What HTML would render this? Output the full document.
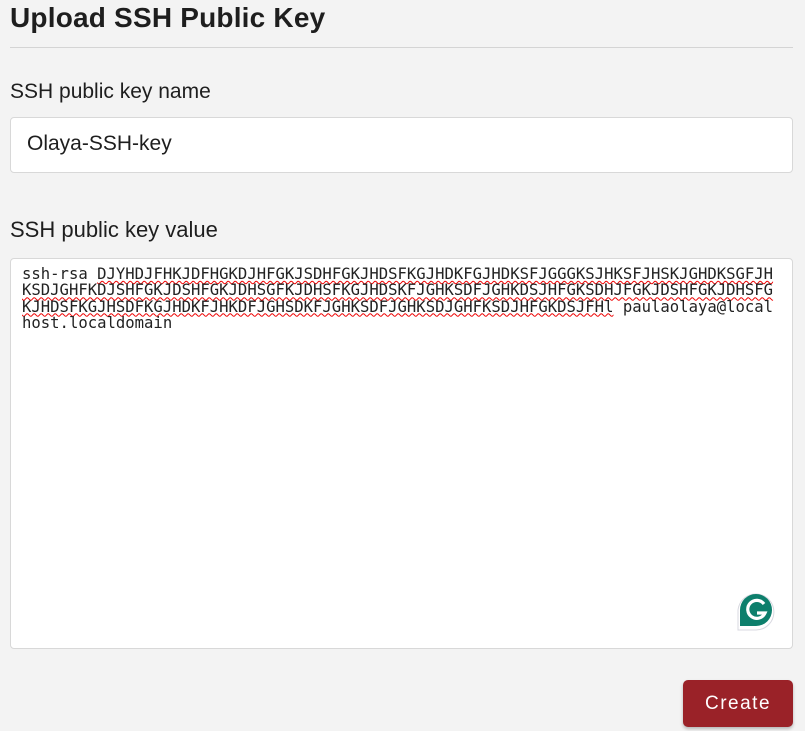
<!DOCTYPE html>
<html><head><style>
body{margin:0;background:#f3f3f3;width:805px;height:731px;overflow:hidden;font-family:"Liberation Sans",sans-serif;color:#1e1e1e;position:relative}
h1{position:absolute;left:10px;top:2px;margin:0;font-size:28px;font-weight:bold;letter-spacing:0.2px}
.hr{position:absolute;left:10px;top:47px;width:783px;height:1px;background:#d4d4d4}
.lbl{position:absolute;left:10px;font-size:21px}
.box{position:absolute;left:10px;width:781px;background:#fff;border:1px solid #d8d8d8;border-radius:4px}
.mono{position:absolute;left:22px;top:266px;font-family:"DejaVu Sans Mono",monospace;font-size:15.6px;line-height:16.3px;white-space:pre;color:#222}
.sq{text-decoration:underline wavy #e00;text-decoration-thickness:1px;text-underline-offset:1px}
.btn{position:absolute;left:683px;top:680px;width:110px;height:47px;background:#9a2228;border-radius:5px;color:#fff;font-size:19px;text-align:center;line-height:48px;letter-spacing:1.5px;box-shadow:0 2px 3px rgba(0,0,0,.25)}
</style></head><body>
<h1>Upload SSH Public Key</h1>
<div class="hr"></div>
<div class="lbl" style="top:80px">SSH public key name</div>
<div class="box" style="top:117px;height:54px"></div>
<div style="position:absolute;left:27px;top:132px;font-size:21px">Olaya-SSH-key</div>
<div class="lbl" style="top:217px;font-size:22px">SSH public key value</div>
<div class="box" style="top:258px;height:389px"></div>
<div class="mono">ssh-rsa <span class="sq">DJYHDJFHKJDFHGKDJHFGKJSDHFGKJHDSFKGJHDKFGJHDKSFJGGGKSJHKSFJHSKJGHDKSGFJH</span>
<span class="sq">KSDJGHFKDJSHFGKJDSHFGKJDHSGFKJDHSFKGJHDSKFJGHKSDFJGHKDSJHFGKSDHJFGKJDSHFGKJDHSFG</span>
<span class="sq">KJHDSFKGJHSDFKGJHDKFJHKDFJGHSDKFJGHKSDFJGHKSDJGHFKSDJHFGKDSJFHl</span> paulaolaya@local
host.localdomain</div>
<svg style="position:absolute;left:737px;top:591px" width="40" height="40" viewBox="0 0 40 40">
<path d="M1 39V19A18 18 0 1 1 19 39Z" fill="#fff" stroke="#d8d8e0" stroke-width="1"/>
<path d="M3 37V19A16 16 0 1 1 19 35H3Z" fill="#0d7f6c"/>
<path d="M27 13A9 9 0 1 0 28 22H20" fill="none" stroke="#fff" stroke-width="3.2"/>
</svg>
<div class="btn">Create</div>
</body></html>
